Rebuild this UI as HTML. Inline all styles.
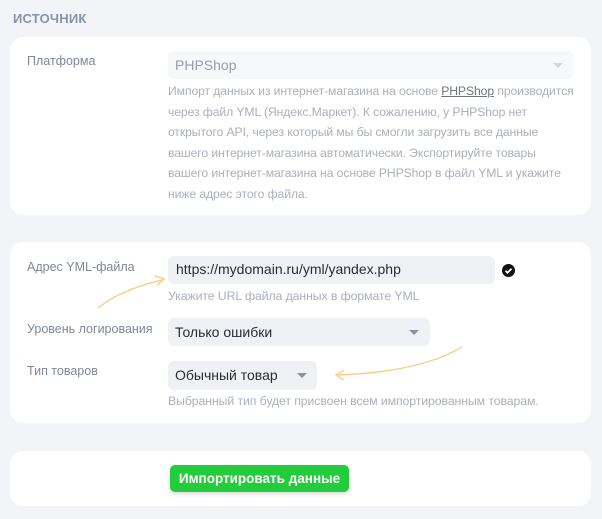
<!DOCTYPE html>
<html><head><meta charset="utf-8"><style>
*{margin:0;padding:0;box-sizing:border-box}
body{width:602px;height:519px;background:#f3f4f8;font-family:"Liberation Sans","Noto Sans CJK SC",sans-serif;position:relative;overflow:hidden}
.a{position:absolute;white-space:nowrap}
.card{position:absolute;left:10px;width:581px;background:#fff;border-radius:13px}
.lbl{font-size:12.5px;color:#80879a}
.hint{font-size:12.3px;color:#acafbd;letter-spacing:-0.1px}
.sel{position:absolute;border-radius:6px}
.tri{position:absolute;width:0;height:0;border-left:5px solid transparent;border-right:5px solid transparent;border-top:5px solid #8d909d}
</style></head><body>
<div class="a" style="left:13px;top:11px;font-size:13px;font-weight:bold;color:#8a93a6;letter-spacing:0.2px">ИСТОЧНИК</div>

<div class="card" style="top:37px;height:178px"></div>
<div class="a lbl" style="left:27px;top:54px">Платформа</div>
<div class="sel" style="left:168px;top:51px;width:406px;height:28px;background:#f7f8fa"></div>
<div class="a" style="left:175px;top:57px;font-size:14px;color:#9a9ca6">PHPShop</div>
<div class="tri" style="left:553px;top:63px;border-top-color:#d4d6dc"></div>
<div class="a hint" style="left:168px;top:81px;line-height:20.6px;font-size:12.2px;white-space:normal;width:420px">Импорт данных из интернет-магазина на основе <span style="color:#6f7282;text-decoration:underline">PHPShop</span> производится<br>через файл YML (Яндекс.Маркет). К сожалению, у PHPShop нет<br>открытого API, через который мы бы смогли загрузить все данные<br>вашего интернет-магазина автоматически. Экспортируйте товары<br>вашего интернет-магазина на основе PHPShop в файл YML и укажите<br>ниже адрес этого файла.</div>

<div class="card" style="top:242px;height:181px"></div>
<div class="a lbl" style="left:27px;top:260px">Адрес YML-файла</div>
<div class="sel" style="left:168px;top:256px;width:327px;height:28px;background:#f0f1f5"></div>
<div class="a" style="left:176px;top:261px;font-size:14px;color:#2a2c33">https://mydomain.ru/yml/yandex.php</div>
<svg class="a" style="left:502px;top:264px" width="13" height="13" viewBox="0 0 13 13"><circle cx="6.5" cy="6.5" r="6.5" fill="#111"/><path d="M3.5 6.7l2 2 4-4" stroke="#fff" stroke-width="1.8" fill="none"/></svg>
<div class="a hint" style="left:168px;top:289px">Укажите URL файла данных в формате YML</div>
<div class="a lbl" style="left:27px;top:322px">Уровень логирования</div>
<div class="sel" style="left:168px;top:318px;width:262px;height:28px;background:#f0f1f5"></div>
<div class="a" style="left:175px;top:324px;font-size:14px;color:#2a2c33">Только ошибки</div>
<div class="tri" style="left:409px;top:330px"></div>
<div class="a lbl" style="left:27px;top:364px">Тип товаров</div>
<div class="sel" style="left:168px;top:361px;width:149px;height:29px;background:#f0f1f5"></div>
<div class="a" style="left:175px;top:367px;font-size:14px;color:#2a2c33">Обычный товар</div>
<div class="tri" style="left:297px;top:373px"></div>
<div class="a hint" style="left:168px;top:394px">Выбранный тип будет присвоен всем импортированным товарам.</div>
<svg class="a" style="left:0;top:0" width="602" height="519"><path d="M98 308Q120 290 162 280" stroke="#fbc97c" stroke-width="1.3" fill="none"/><path d="M155 276L164 279L157 285" stroke="#fbc97c" stroke-width="1.3" fill="none"/><path d="M462 347Q420 372 338 375" stroke="#fbc97c" stroke-width="1.3" fill="none"/><path d="M344 370L336 375L344 380" stroke="#fbc97c" stroke-width="1.3" fill="none"/></svg>

<div class="card" style="top:451px;height:55px"></div>
<div class="a" style="left:170px;top:465px;width:179px;height:27px;background:#22cc3a;border-radius:5px;box-shadow:0 2px 4px rgba(0,0,0,0.15);color:#fff;font-size:13.5px;font-weight:bold;text-align:center;line-height:27px">Импортировать данные</div>
</body></html>
